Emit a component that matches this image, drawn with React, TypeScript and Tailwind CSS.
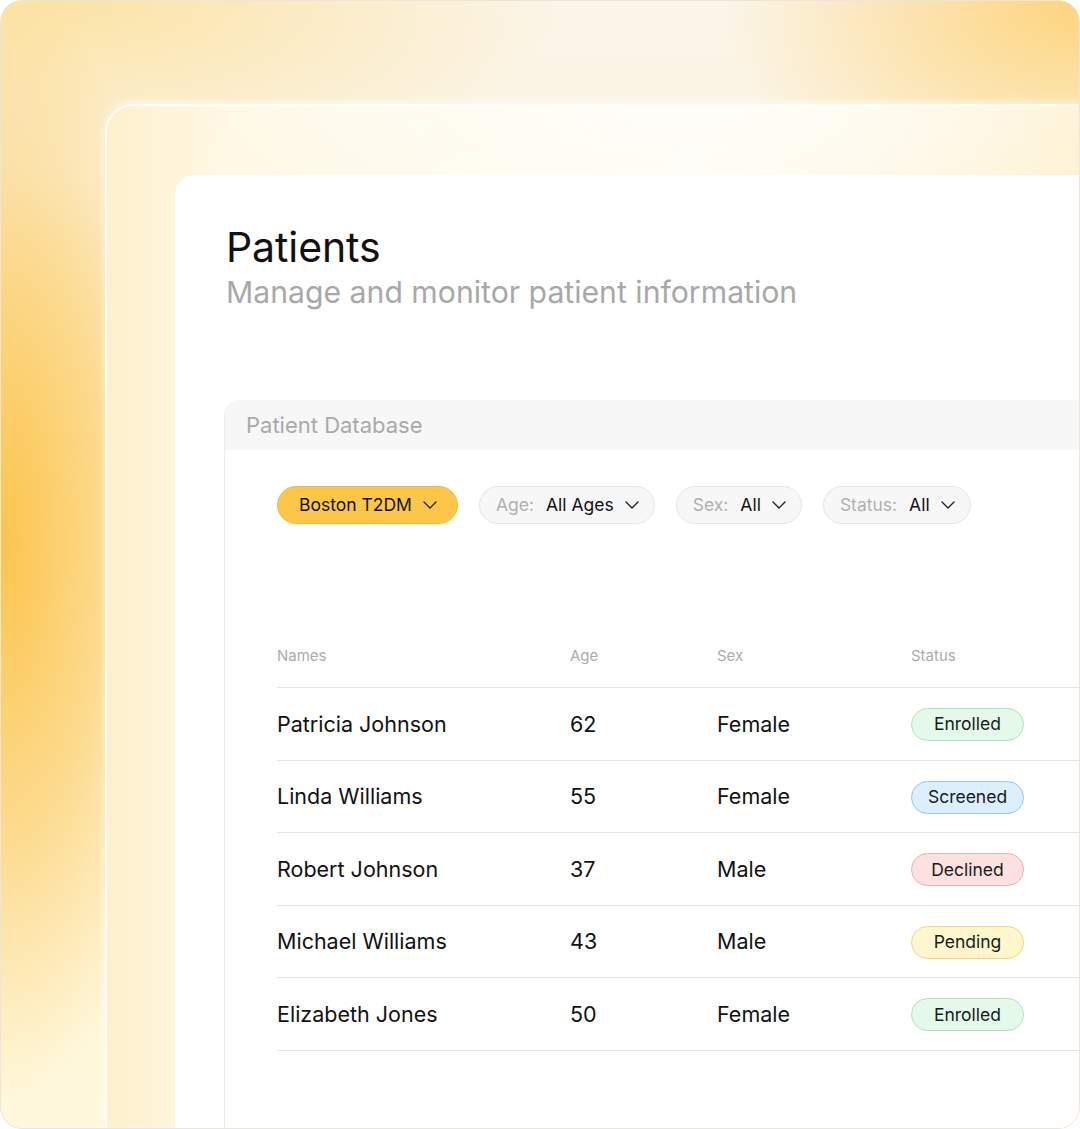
type Status = "Enrolled" | "Screened" | "Declined" | "Pending";

const patients: { name: string; age: number; sex: string; status: Status }[] = [
  { name: "Patricia Johnson", age: 62, sex: "Female", status: "Enrolled" },
  { name: "Linda Williams", age: 55, sex: "Female", status: "Screened" },
  { name: "Robert Johnson", age: 37, sex: "Male", status: "Declined" },
  { name: "Michael Williams", age: 43, sex: "Male", status: "Pending" },
  { name: "Elizabeth Jones", age: 50, sex: "Female", status: "Enrolled" },
];

const badgeStyles: Record<Status, string> = {
  Enrolled: "bg-[#e4f9ea] border-[#a9e5b9]",
  Screened: "bg-[#dcefff] border-[#8cc8f2]",
  Declined: "bg-[#fde1e1] border-[#f1abab]",
  Pending: "bg-[#fef6cd] border-[#f3d67c]",
};

function Chevron() {
  return (
    <svg width="14" height="8" viewBox="0 0 14 8" fill="none" className="ml-[11px] shrink-0">
      <polyline
        points="1,1 7,7 13,1"
        stroke="#222"
        strokeWidth="1.4"
        strokeLinecap="round"
        strokeLinejoin="round"
      />
    </svg>
  );
}

function FilterPill({ label, value }: { label: string; value: string }) {
  return (
    <button className="flex h-[38px] items-center rounded-full border border-[#e6e6e6] bg-[#f7f7f7] pl-[16px] pr-[15px] text-[17.5px]">
      <span className="text-[#b0b0b0]">{label}</span>
      <span className="ml-[12px] text-[#111]">{value}</span>
      <Chevron />
    </button>
  );
}

export default function App() {
  return (
    <div
      className="h-[1129px] w-[1080px] overflow-hidden bg-white"
      style={{ fontFamily: "Inter, 'Noto Sans', sans-serif" }}
    >
      {/* Outer frame */}
      <div className="flex h-full w-full overflow-hidden rounded-[22px] border border-[#ebe6dc] bg-[radial-gradient(ellipse_190px_560px_at_0%_48%,#fcc44c_0%,rgba(252,200,90,0.55)_55%,rgba(253,230,160,0)_100%),radial-gradient(ellipse_360px_220px_at_100%_0%,#fdd47c_0%,rgba(253,218,140,0)_100%),radial-gradient(ellipse_520px_180px_at_5%_0%,#fce3a3_0%,rgba(252,227,163,0)_100%),linear-gradient(180deg,#fbf5ea_0%,#fcefcb_40%,#fff8dc_100%)] pl-[104px] pt-[103px]">
        {/* Second layer */}
        <div className="flex flex-1 rounded-tl-[28px] border-l-2 border-t-2 border-white/90 bg-[radial-gradient(ellipse_500px_140px_at_60%_0%,rgba(255,253,248,1)_0%,rgba(255,253,248,0)_100%),linear-gradient(90deg,#fef0cc_0%,#fff8e4_12%,#fffcf3_60%,#fef1cf_100%)] pl-[68px] pt-[69px] shadow-[0_-2px_8px_rgba(255,255,255,0.6)]">
          {/* White card */}
          <div className="flex-1 rounded-tl-[20px] bg-white pl-[49px] pt-[48px]">
            <h1 className="ml-[2px] text-[41px] leading-[48px] tracking-[-0.1px] text-[#111]">
              Patients
            </h1>
            <p className="ml-[2px] mt-[2px] text-[30.2px] leading-[38px] text-[#a8a8a8]">
              Manage and monitor patient information
            </p>

            {/* Patient Database panel */}
            <div className="mt-[89px] h-[800px] rounded-tl-[16px] border-l border-[#ececec]">
              <div className="flex h-[50px] items-center rounded-tl-[16px] bg-[#f7f7f7] pl-[21px] text-[22px] text-[#a9a9a9]">
                Patient Database
              </div>

              <div className="pl-[52px]">
                {/* Filters */}
                <div className="mt-[36px] flex gap-[21px]">
                  <button className="flex h-[38px] items-center rounded-full border border-[#f2bb3f] bg-[#fcc749] pl-[21px] pr-[20px] text-[17.5px] text-[#111]">
                    Boston T2DM
                    <Chevron />
                  </button>
                  <FilterPill label="Age:" value="All Ages" />
                  <FilterPill label="Sex:" value="All" />
                  <FilterPill label="Status:" value="All" />
                </div>

                {/* Table */}
                <div className="mt-[122px]">
                  <div className="grid grid-cols-[293px_147px_194px_1fr] border-b border-[#e6e6e6] pb-[21px] text-[15px] leading-[20px] text-[#acacac]">
                    <div>Names</div>
                    <div>Age</div>
                    <div>Sex</div>
                    <div>Status</div>
                  </div>
                  {patients.map((p, i) => (
                    <div
                      key={i}
                      className="grid h-[72.6px] grid-cols-[293px_147px_194px_1fr] items-center border-b border-[#e6e6e6] text-[21.5px] text-[#111]"
                    >
                      <div>{p.name}</div>
                      <div>{p.age}</div>
                      <div>{p.sex}</div>
                      <div>
                        <span
                          className={`inline-flex h-[33px] w-[113px] items-center justify-center rounded-full border text-[17.5px] text-[#1a1a1a] ${badgeStyles[p.status]}`}
                        >
                          {p.status}
                        </span>
                      </div>
                    </div>
                  ))}
                </div>
              </div>
            </div>
          </div>
        </div>
      </div>
    </div>
  );
}
